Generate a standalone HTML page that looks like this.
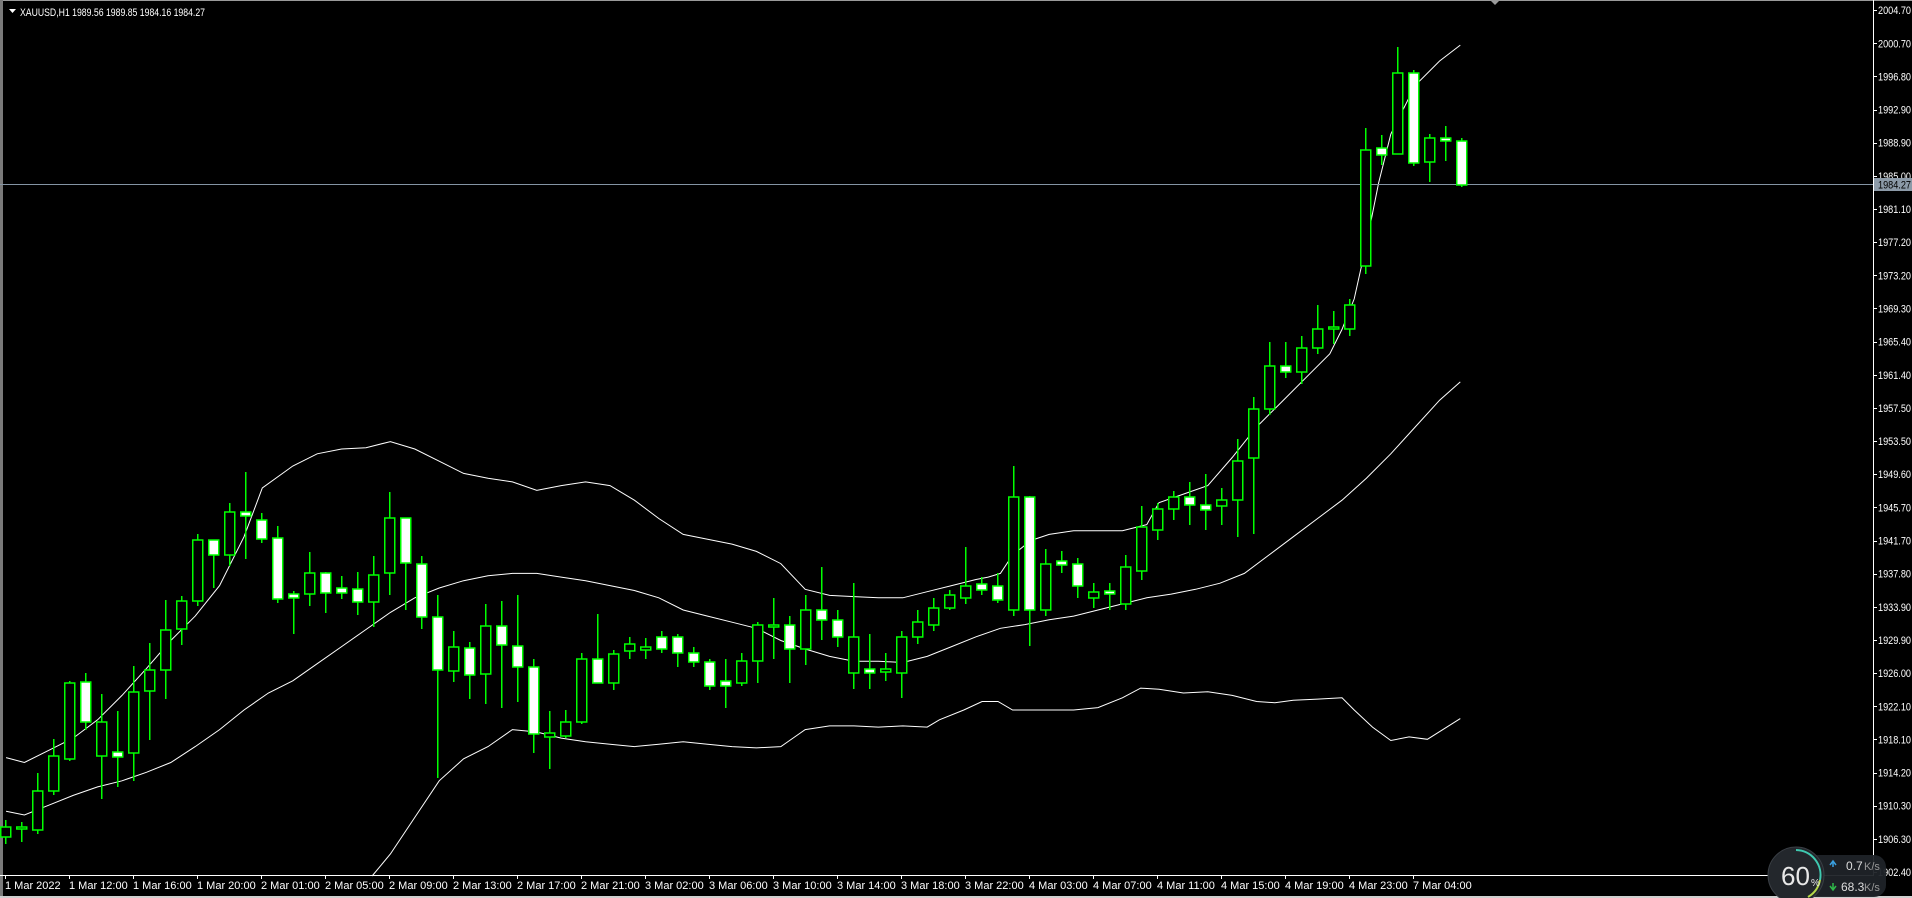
<!DOCTYPE html>
<html><head><meta charset="utf-8">
<style>
html,body{margin:0;padding:0;background:#000;width:1912px;height:898px;overflow:hidden;}
svg{display:block;font-family:"Liberation Sans",Arial,sans-serif;}
</style></head>
<body>
<svg id="c" width="1912" height="898" xmlns="http://www.w3.org/2000/svg">
<rect width="1912" height="898" fill="#000"/>
<rect x="0" y="0" width="1912" height="1" fill="#9a9a9a"/>
<rect x="0" y="0" width="3" height="898" fill="#7a7a7a"/>
<rect x="0" y="896" width="1912" height="2" fill="#cfcfcf"/>
<g id="g"></g>
<polygon points="1490,0 1500,0 1495,5" fill="#9a9a9a"/>
<polygon points="9,9 16,9 12.5,13" fill="#fff"/>
<text x="20" y="16" fill="#fff" font-size="11" textLength="185" lengthAdjust="spacingAndGlyphs">XAUUSD,H1  1989.56 1989.85 1984.16 1984.27</text>
</svg>
<script>
var g=document.getElementById('g'),s='';
var C=[[0,'u',827,837,820,844],[1,'u',827,829,822,842],[2,'u',791,830,773,834],[3,'u',756,791,739,795],[4,'u',683,759,681,761],[5,'d',682,722,673,730],[6,'u',722,756,694,799],[7,'d',752,757,711,787],[8,'u',692,753,666,781],[9,'u',670,691,643,740],[10,'u',630,670,600,699],[11,'u',601,629,596,645],[12,'u',540,601,534,606],[13,'d',540,555,540,588],[14,'u',512,555,503,566],[15,'d',512,516,472,559],[16,'d',520,539,513,543],[17,'d',538,599,526,603],[18,'d',594,598,591,634],[19,'u',573,594,552,606],[20,'d',573,593,572,613],[21,'d',588,593,576,599],[22,'d',589,602,572,615],[23,'u',575,602,556,627],[24,'u',518,573,492,595],[25,'d',518,563,518,610],[26,'d',564,617,556,629],[27,'d',617,670,595,778],[28,'u',647,671,631,682],[29,'d',648,675,642,699],[30,'u',626,674,604,704],[31,'d',626,645,601,708],[32,'d',646,667,595,702],[33,'d',667,734,659,753],[34,'u',733,737,711,769],[35,'u',722,736,710,738],[36,'u',659,722,653,724],[37,'d',659,683,614,683],[38,'u',654,683,650,690],[39,'u',644,651,637,659],[40,'u',647,650,638,659],[41,'d',637,649,631,653],[42,'d',637,653,634,667],[43,'d',653,662,647,667],[44,'d',662,686,659,690],[45,'d',681,686,659,708],[46,'u',661,683,653,686],[47,'u',625,661,622,683],[48,'u',625,627,598,659],[49,'d',625,649,616,683],[50,'u',610,649,595,665],[51,'d',610,620,567,640],[52,'d',620,637,610,647],[53,'u',637,673,583,689],[54,'d',669,673,634,689],[55,'u',669,672,653,681],[56,'u',637,673,631,698],[57,'u',622,637,610,644],[58,'u',608,625,598,631],[59,'u',595,608,590,610],[60,'u',586,598,547,604],[61,'d',584,590,577,595],[62,'d',586,600,573,603],[63,'u',497,610,466,616],[64,'d',497,610,496,646],[65,'u',564,610,549,616],[66,'d',561,565,551,573],[67,'d',564,586,558,598],[68,'u',592,598,583,608],[69,'d',591,594,583,610],[70,'u',567,604,555,610],[71,'u',527,571,506,580],[72,'u',509,530,503,540],[73,'u',497,509,491,520],[74,'d',497,505,482,525],[75,'d',505,510,474,530],[76,'u',500,506,488,525],[77,'u',461,500,439,537],[78,'u',409,458,397,534],[79,'u',366,409,342,415],[80,'d',366,372,342,378],[81,'u',348,372,336,384],[82,'u',329,348,305,354],[83,'u',327,329,311,344],[84,'u',305,329,299,336],[85,'u',150,266,128,274],[86,'d',148,155,135,165],[87,'u',73,154,47,154],[88,'d',73,163,70,166],[89,'u',138,162,134,182],[90,'d',138,141,126,161],[91,'d',141,185,138,187]];
var up=[[5,621],[20,625],[40,615],[60,605],[80,590],[100,570],[120,548],[140,525],[160,505],[180,480],[200,440],[215,400],[240,382],[260,372],[280,368],[300,367],[320,362],[340,368],[360,378],[380,388],[400,392],[420,395],[440,402],[460,398],[480,395],[500,398],[520,410],[540,425],[560,438],[580,442],[600,446],[620,452],[640,462],[660,483],[680,488],[700,489],[720,490],[740,490],[760,485],[780,480],[800,475],[810,473],[820,470],[830,455],[845,443],[860,438],[880,435],[900,435],[920,435],[940,430],[950,412],[970,405],[990,398],[1010,375],[1030,350],[1050,330],[1070,310],[1090,290],[1100,270],[1110,245],[1120,200],[1130,150],[1140,110],[1160,70],[1180,50],[1197,37]];
var mid=[[5,665],[20,668],[40,660],[60,652],[80,645],[100,640],[120,633],[140,625],[160,612],[180,598],[200,582],[220,568],[240,558],[260,544],[280,530],[300,516],[320,502],[340,490],[360,482],[380,476],[400,472],[420,470],[440,470],[460,473],[480,476],[500,480],[520,484],[540,490],[560,500],[580,505],[600,510],[620,515],[640,525],[660,532],[680,538],[700,542],[720,542],[740,543],[760,538],[780,530],[800,522],[820,515],[840,512],[860,508],[880,505],[900,500],[920,495],[940,490],[960,487],[980,483],[1000,478],[1020,470],[1040,455],[1060,440],[1080,425],[1100,410],[1120,392],[1140,372],[1160,350],[1180,328],[1197,313]];
var lo=[[305,718],[320,700],[340,670],[360,640],[380,622],[400,612],[420,598],[440,600],[460,605],[480,608],[500,610],[520,612],[540,610],[560,608],[580,610],[600,612],[620,613],[640,612],[650,605],[660,598],[680,595],[700,595],[720,596],[740,595],[760,596],[770,590],[790,582],[805,575],[818,575],[830,582],[850,582],[880,582],[900,580],[920,572],[935,564],[950,565],[970,568],[990,567],[1010,570],[1030,575],[1045,576],[1060,574],[1080,573],[1100,572],[1110,582],[1125,596],[1140,607],[1155,604],[1170,606],[1197,589]];
function pl(a){return '<polyline fill="none" stroke="#fff" stroke-width="1" points="'+a.map(function(p){return (p[0]*1.22).toFixed(1)+','+(p[1]*1.22).toFixed(1)}).join(' ')+'"/>';}
s+=pl(up)+pl(mid)+pl(lo);
s+='<rect x="0" y="184" width="1873" height="1" fill="#8494a4"/>';
C.forEach(function(c){var x=5+16*c[0];
 s+='<rect x="'+x+'" y="'+c[4]+'" width="1.5" height="'+(c[5]-c[4])+'" fill="#00ff00"/>';
 var h=Math.max(c[3]-c[2],2);
 s+='<rect x="'+(x-4.25)+'" y="'+c[2]+'" width="10" height="'+h+'" fill="'+(c[1]=='u'?'#000':'#fff')+'" stroke="#00ff00" stroke-width="1.5"/>';
});
s+='<rect x="1873" y="0" width="1" height="876" fill="#fff"/>';
s+='<rect x="0" y="875" width="1874" height="1" fill="#fff"/>';
var P=['2004.70','2000.70','1996.80','1992.90','1988.90','1985.00','1981.10','1977.20','1973.20','1969.30','1965.40','1961.40','1957.50','1953.50','1949.60','1945.70','1941.70','1937.80','1933.90','1929.90','1926.00','1922.10','1918.10','1914.20','1910.30','1906.30','1902.40'];
P.forEach(function(p,k){var y=872-(26-k)*33.15;
 s+='<rect x="1873" y="'+y.toFixed(0)+'" width="4" height="1" fill="#fff"/>';
 s+='<text x="1878" y="'+(y+4).toFixed(1)+'" fill="#fff" font-size="11" textLength="33" lengthAdjust="spacingAndGlyphs">'+p+'</text>';});
s+='<rect x="1874" y="178" width="38" height="13" fill="#8c9aa8"/><text x="1878" y="188.5" fill="#000" font-size="11" textLength="33" lengthAdjust="spacingAndGlyphs">1984.27</text>';
var T=['1 Mar 2022','1 Mar 12:00','1 Mar 16:00','1 Mar 20:00','2 Mar 01:00','2 Mar 05:00','2 Mar 09:00','2 Mar 13:00','2 Mar 17:00','2 Mar 21:00','3 Mar 02:00','3 Mar 06:00','3 Mar 10:00','3 Mar 14:00','3 Mar 18:00','3 Mar 22:00','4 Mar 03:00','4 Mar 07:00','4 Mar 11:00','4 Mar 15:00','4 Mar 19:00','4 Mar 23:00','7 Mar 04:00'];
T.forEach(function(t,k){var x=4+64*k;
 s+='<rect x="'+(x+1)+'" y="875" width="1" height="4" fill="#fff"/>';
 s+='<text x="'+(x+1)+'" y="889" fill="#fff" font-size="11">'+t+'</text>';});
s+='<rect x="1800" y="855" width="86" height="42" rx="12" fill="#1f2328" opacity="0.95"/>';
s+='<circle cx="1796" cy="875" r="28" fill="#23272c" stroke="#3a3f45" stroke-width="1"/>';
s+='<path d="M1796,850 A25,25 0 0 1 1820,880" fill="none" stroke="#3fc9b0" stroke-width="2"/>';
s+='<path d="M1820,880 A25,25 0 0 1 1808,897" fill="none" stroke="#b5d94a" stroke-width="2"/>';
s+='<text x="1781" y="885" fill="#e8e8e8" font-size="26">60</text><text x="1811" y="886" fill="#e8e8e8" font-size="10">%</text>';
s+='<path d="M1833,867 L1833,862 M1830,865 L1833,861 L1836,865" stroke="#3aa0e0" stroke-width="1.5" fill="none"/>';
s+='<text x="1846" y="870" fill="#ddd" font-size="12">0.7</text><text x="1864" y="870" fill="#999" font-size="11">K/s</text>';
s+='<path d="M1833,883 L1833,889 M1830,886 L1833,890 L1836,886" stroke="#2fb84a" stroke-width="1.5" fill="none"/>';
s+='<text x="1841" y="891" fill="#ddd" font-size="12">68.3</text><text x="1864" y="891" fill="#999" font-size="11">K/s</text>';
g.innerHTML=s;
</script>
</body></html>
